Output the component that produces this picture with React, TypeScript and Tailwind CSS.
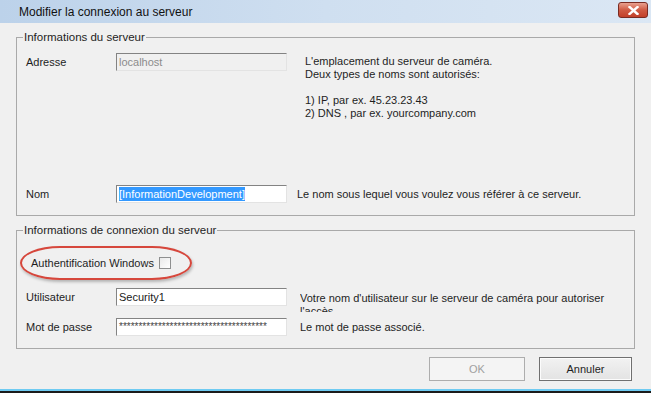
const font = { fontFamily: '"Liberation Sans", Arial, sans-serif' };

const Input = ({ value, disabled, selected, small }: { value: string; disabled?: boolean; selected?: boolean; small?: boolean }) => (
  <div
    className={`w-[171px] h-[18px] flex items-center pl-[2px] border border-t-[#838383] border-l-[#838383] border-r-[#e3e3e3] border-b-[#e3e3e3] ${
      disabled ? 'bg-[#f0f0f0] text-[#8c8c8c]' : 'bg-white text-[#1a1a1a]'
    }`}
  >
    {selected ? (
      <span className="bg-[#3399ff] text-white leading-[14px]">{value}</span>
    ) : (
      <span className={small ? 'leading-[14px] text-[10px] text-[#444]' : 'leading-[14px]'}>{value}</span>
    )}
  </div>
);

export default function App() {
  return (
    <div className="w-[651px] h-[393px] bg-[#f0f0f0] flex flex-col text-[11px] text-[#1e1e1e] overflow-hidden" style={font}>
      {/* title bar */}
      <div className="h-[23px] shrink-0 flex items-center pl-[19px] pr-[3px] bg-gradient-to-r from-[#bcd2ea] via-[#cfdff0] to-[#dbe7f4]">
        <span className="text-[12px] text-[#111]">Modifier la connexion au serveur</span>
        <div className="ml-auto mt-[-3px] w-[30px] h-[16px] rounded-[3px] border border-[#7a2b22] bg-gradient-to-b from-[#e8a08f] via-[#cf5a43] to-[#c2402a] flex items-center justify-center">
          <svg width="11" height="9" viewBox="0 0 11 9">
            <path d="M1.5 1 L9.5 8 M9.5 1 L1.5 8" stroke="#fff" strokeWidth="2.4" strokeLinecap="square" />
          </svg>
        </div>
      </div>

      <div className="flex flex-col px-[16px] pt-[8px]">
        {/* group 1 */}
        <fieldset className="h-[185px] border border-[#a9a9a9]">
          <legend className="ml-[6px] px-[1px] leading-[13px] text-[11.5px]">Informations du serveur</legend>
          <div className="flex mt-[9px] h-[67px]">
            <span className="w-[99px] pl-[9px] h-[18px] flex items-center">Adresse</span>
            <Input value="localhost" disabled />
            <div className="ml-[18px] mt-[2px] leading-[13px]">
              <div>L'emplacement du serveur de caméra.</div>
              <div>Deux types de noms sont autorisés:</div>
              <div className="h-[13px]" />
              <div>1) IP, par ex. 45.23.23.43</div>
              <div>2) DNS , par ex. yourcompany.com</div>
            </div>
          </div>
          <div className="flex mt-[65px]">
            <span className="w-[99px] pl-[9px] h-[18px] flex items-center">Nom</span>
            <Input value="[InformationDevelopment]" selected />
            <span className="ml-[10px] h-[18px] flex items-center">Le nom sous lequel vous voulez vous référer à ce serveur.</span>
          </div>
        </fieldset>

        {/* group 2 */}
        <fieldset className="mt-[8px] h-[125px] border border-[#a9a9a9]">
          <legend className="ml-[6px] px-[1px] leading-[13px] text-[11.5px]">Informations de connexion du serveur</legend>
          <div className="mt-[9px] ml-[3px] w-fit h-[34px] pl-[9px] pr-[19px] flex items-center rounded-[40px/17px] border-[2.5px] border-[#d6473c] shadow-[1px_2px_3px_rgba(0,0,0,0.25)]">
            <span>Authentification Windows</span>
            <span className="ml-[5px] w-[12px] h-[12px] border border-[#8e8f8f] bg-gradient-to-br from-[#e9e9e9] to-[#ffffff]" />
          </div>
          <div className="flex mt-[8px]">
            <span className="w-[99px] pl-[9px] h-[18px] flex items-center">Utilisateur</span>
            <Input value="Security1" />
            <div className="ml-[13px] h-[20px] mt-[4px] overflow-hidden leading-[13px] w-[320px]">
              Votre nom d'utilisateur sur le serveur de caméra pour autoriser l'accès.
            </div>
          </div>
          <div className="flex mt-[6px]">
            <span className="w-[99px] pl-[9px] h-[18px] flex items-center">Mot de passe</span>
            <Input value="**************************************" small />
            <span className="ml-[13px] h-[18px] flex items-center">Le mot de passe associé.</span>
          </div>
        </fieldset>

        {/* buttons */}
        <div className="flex justify-end gap-[14px] mt-[8px] pr-[3px]">
          <button className="w-[96px] h-[24px] border border-[#adadad] bg-[#f4f4f4] text-[#a0a0a0]">OK</button>
          <button className="w-[93px] h-[24px] border border-[#707070] bg-gradient-to-b from-[#f2f2f2] to-[#e3e3e3] text-[#1e1e1e] shadow-[inset_0_0_0_1px_#fcfcfc]">
            Annuler
          </button>
        </div>
      </div>

      <div className="mt-auto h-[2px] bg-[#6fcbf2]" />
      <div className="h-[2px] bg-[#1b1b1b]" />
    </div>
  );
}
